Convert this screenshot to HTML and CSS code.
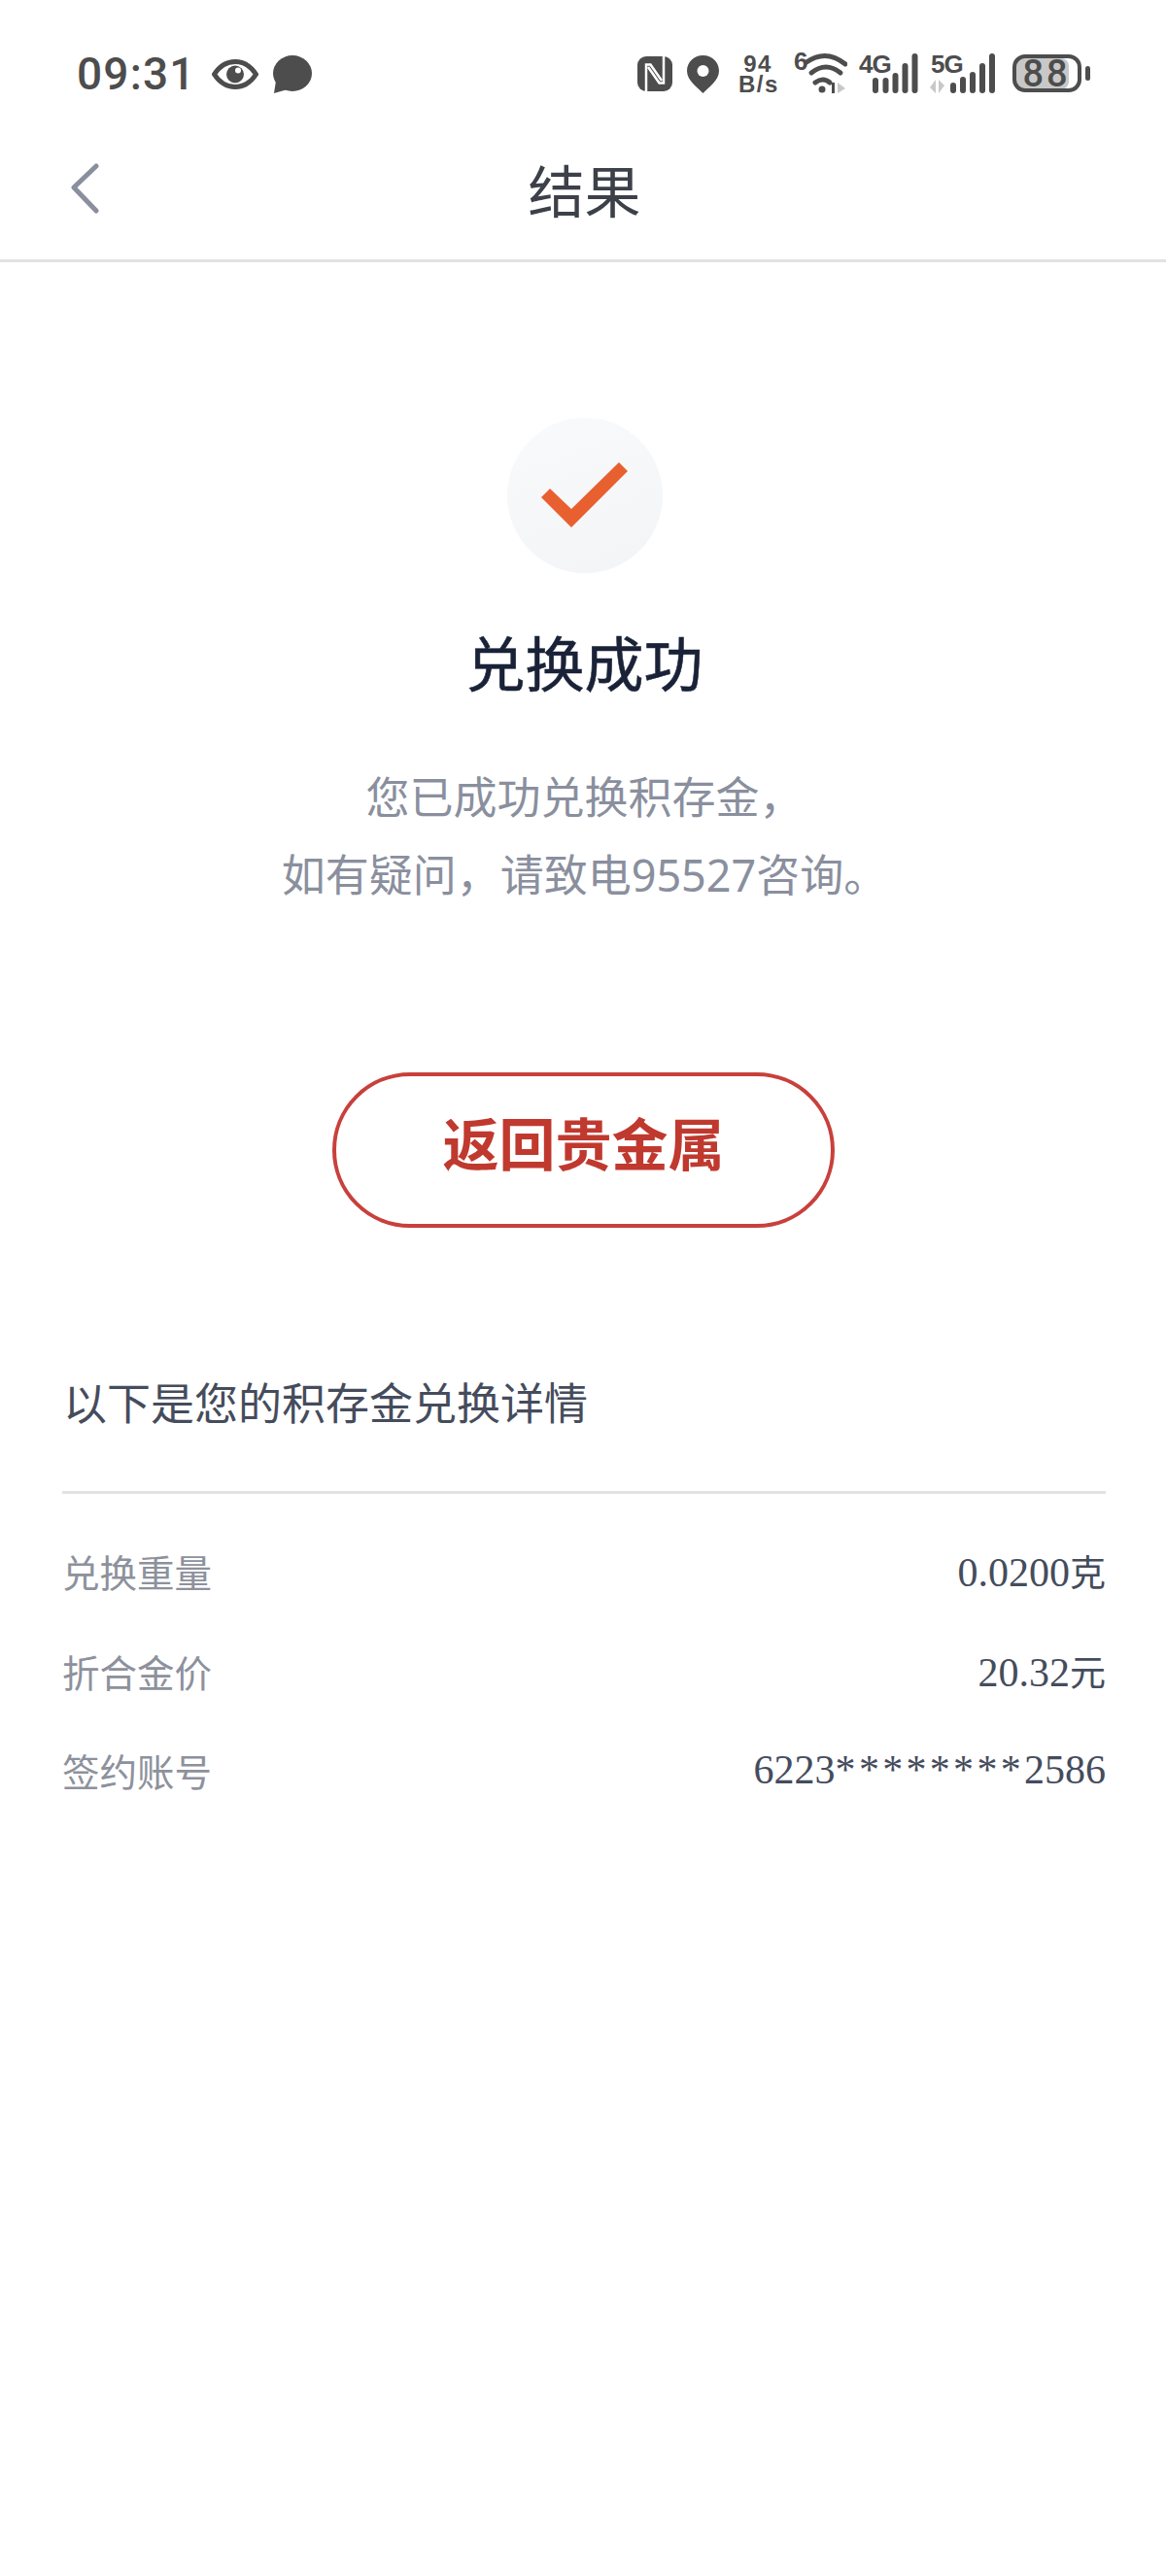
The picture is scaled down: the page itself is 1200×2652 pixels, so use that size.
FILE: index.html
```html
<!DOCTYPE html>
<html lang="zh">
  <head>
    <meta charset="utf-8" />
    <title>结果</title>
    <link rel="stylesheet" href="styles.css">
  </head>
  <body>
    <div class="status-bar">
      <div class="status-left">
        <span class="clock">09:31</span>
        <svg class="icon-eye" width="48" height="31" viewBox="0 0 48 31">
          <path d="M2.5 15.5C8 7 15 2.5 24 2.5S40 7 45.5 15.5C40 24 33 28.5 24 28.5S8 24 2.5 15.5Z" fill="none" stroke="#4d4d4d" stroke-width="5"/>
          <circle cx="24" cy="15.5" r="9" fill="#4d4d4d"/>
          <circle cx="27" cy="11.5" r="3" fill="#fff"/>
        </svg>
        <svg class="icon-chat" width="41" height="39" viewBox="0 0 41 39">
          <ellipse cx="21" cy="18.5" rx="20" ry="18.5" fill="#4d4d4d"/>
          <path d="M4 26L2 39L16 35Z" fill="#4d4d4d"/>
        </svg>
      </div>
      <div class="status-right">
        <svg class="icon-nfc" width="36" height="36" viewBox="0 0 36 36">
          <rect width="36" height="36" rx="9" fill="#4d4d4d"/>
          <path d="M9 36V8.5H13.5L25 25" fill="none" stroke="#fff" stroke-width="2.5"/>
          <path d="M27 0V27.5H22.5L11 11" fill="none" stroke="#fff" stroke-width="2.5"/>
        </svg>
        <svg class="icon-pin" width="33" height="39" viewBox="0 0 33 39">
          <path d="M16.5 0C26 0 33 7 33 16C33 26 22 33 16.5 39C11 33 0 26 0 16C0 7 7 0 16.5 0Z" fill="#4d4d4d"/>
          <circle cx="16.5" cy="16" r="6" fill="#fff"/>
        </svg>
        <div class="net-speed">94<br>B/s</div>
        <svg class="icon-wifi" width="55" height="54" viewBox="0 -6 55 54">
          <text class="sb-small" x="0" y="17">6</text>
          <path d="M13 9Q33 -5 53 11" fill="none" stroke="#4d4d4d" stroke-width="5" stroke-linecap="round"/>
          <path d="M18 20Q33 8 48 20" fill="none" stroke="#4d4d4d" stroke-width="5" stroke-linecap="round"/>
          <path d="M22 30Q30 24 37 30" fill="none" stroke="#4d4d4d" stroke-width="5" stroke-linecap="round"/>
          <circle cx="29" cy="37" r="3.5" fill="#4d4d4d"/>
          <rect x="39" y="30" width="3" height="11" fill="#4d4d4d"/>
          <path d="M45 30L53 36L45 41Z" fill="#c8c8c8"/>
        </svg>
        <svg class="icon-signal" width="61" height="54" viewBox="0 -6 61 54">
          <text class="sb-small" x="0" y="20">4G</text>
          <rect x="14" y="25" width="6" height="16" rx="3" fill="#4d4d4d"/>
          <rect x="24.5" y="25" width="6" height="16" rx="3" fill="#4d4d4d"/>
          <rect x="34.5" y="20" width="6" height="21" rx="3" fill="#4d4d4d"/>
          <rect x="44.5" y="10" width="6" height="31" rx="3" fill="#4d4d4d"/>
          <rect x="54.5" y="0" width="6" height="41" rx="3" fill="#4d4d4d"/>
        </svg>
        <svg class="icon-signal" width="68" height="54" viewBox="0 -6 68 54">
          <text class="sb-small" x="1" y="20">5G</text>
          <path d="M6 27V41L0 35Z M9 41V27L15 33Z" fill="#c8c8c8"/>
          <rect x="21" y="30" width="6" height="11" rx="3" fill="#4d4d4d"/>
          <rect x="31" y="24" width="6" height="17" rx="3" fill="#4d4d4d"/>
          <rect x="41" y="19" width="6" height="22" rx="3" fill="#4d4d4d"/>
          <rect x="51" y="10" width="6" height="31" rx="3" fill="#4d4d4d"/>
          <rect x="61" y="0" width="6" height="41" rx="3" fill="#4d4d4d"/>
        </svg>
        <svg class="icon-battery" width="80" height="50" viewBox="0 -5 80 50">
          <rect x="4" y="4" width="54" height="32" rx="8" fill="#c8c8c8"/>
          <rect x="2" y="2" width="67" height="35" rx="11" fill="none" stroke="#4d4d4d" stroke-width="4"/>
          <rect x="75" y="12" width="5" height="15" rx="2.5" fill="#4d4d4d"/>
          <text class="sb-batt" x="35" y="33" text-anchor="middle">88</text>
        </svg>
      </div>
    </div>

    <div class="nav-bar">
      <svg class="back-btn" width="32" height="54" viewBox="0 0 32 54">
        <path d="M27 5L4 27L27 51" fill="none" stroke="#8a8f9e" stroke-width="5" stroke-linecap="round" stroke-linejoin="round"/>
      </svg>
      <h1 class="nav-title">结果</h1>
    </div>

    <div class="result">
      <div class="check-circle">
        <svg width="90" height="68" viewBox="0 0 90 68">
          <path d="M0 36L9 27L31 48L80 0L89 9L31 67Z" fill="#e8602f"/>
        </svg>
      </div>
      <h2 class="result-title">兑换成功</h2>
      <p class="result-text">您已成功兑换积存金，<br>如有疑问，请致电95527咨询。</p>
      <button class="back-metal" type="button">返回贵金属</button>
    </div>

    <div class="detail">
      <div class="detail-head">以下是您的积存金兑换详情</div>
      <div class="detail-row">
        <span class="detail-label">兑换重量</span>
        <span class="detail-value">0.0200<span class="unit">克</span></span>
      </div>
      <div class="detail-row">
        <span class="detail-label">折合金价</span>
        <span class="detail-value">20.32<span class="unit">元</span></span>
      </div>
      <div class="detail-row">
        <span class="detail-label">签约账号</span>
        <span class="detail-value">6223<span class="mask">********</span>2586</span>
      </div>
    </div>
  </body>
</html>
```

FILE: styles.css
```css
/* result page */
body {
  font-family: "Noto Sans", "Noto Sans CJK SC", sans-serif;
  background-color: #fff;
  margin: 0;
  padding: 0;
}
h1, h2, p {
  margin: 0;
  font-weight: normal;
}

/* status bar */
.status-bar {
  display: flex;
  justify-content: space-between;
  align-items: center;
  height: 80px;
  padding: 36px 78px 0 79px;
}
.status-left, .status-right {
  display: flex;
  align-items: center;
}
.clock {
  font-family: Roboto, sans-serif;
  font-size: 46px;
  font-weight: 500;
  color: #4d4d4d;
  letter-spacing: 1.2px;
}
.icon-eye {
  margin-left: 16px;
}
.icon-chat {
  margin-left: 14px;
}
.icon-pin {
  margin-left: 15px;
}
.net-speed {
  width: 40px;
  margin-left: 20px;
  font-family: "Liberation Sans", sans-serif;
  font-size: 24px;
  font-weight: bold;
  line-height: 21px;
  letter-spacing: 1.5px;
  text-align: center;
  color: #4d4d4d;
}
.icon-wifi {
  margin-left: 17px;
}
.icon-signal {
  margin-left: 12px;
}
.icon-battery {
  margin-left: 17px;
}
.sb-small {
  font-family: "Liberation Sans", sans-serif;
  font-size: 26px;
  font-weight: bold;
  letter-spacing: -1px;
  fill: #4d4d4d;
}
.sb-batt {
  font-family: Roboto, sans-serif;
  font-size: 38px;
  font-weight: 500;
  letter-spacing: 3px;
  fill: #4d4d4d;
}

/* nav */
.nav-bar {
  position: relative;
  display: flex;
  justify-content: center;
  align-items: center;
  height: 146px;
  padding: 5px 0 0 3px;
  border-bottom: 3px solid #e2e2e2;
}
.back-btn {
  position: absolute;
  left: 72px;
  top: 50px;
}
.nav-title {
  font-size: 58px;
  color: #3c4048;
}

/* result block */
.result {
  display: flex;
  flex-direction: column;
  align-items: center;
  padding-top: 160px;
}
.check-circle {
  display: flex;
  justify-content: center;
  align-items: center;
  width: 160px;
  height: 160px;
  margin-left: 3px;
  border-radius: 50%;
  background: linear-gradient(160deg, #f9fafb, #f3f4f6);
}
.result-title {
  margin: 51px 0 0 3px;
  font-size: 61px;
  line-height: 86px;
  color: #1a2238;
  -webkit-text-stroke: 0.6px #1a2238;
}
.result-text {
  margin: 54px 0 0 3px;
  font-size: 45px;
  line-height: 80px;
  text-align: center;
  color: #8a8f9e;
}
.back-metal {
  width: 517px;
  height: 160px;
  margin: 163px 0 0 1px;
  padding: 0 0 18px;
  border: 4px solid #c8403c;
  border-radius: 80px;
  background-color: #fff;
  font-family: inherit;
  font-size: 58px;
  font-weight: bold;
  color: #c0392f;
}

/* detail list */
.detail {
  margin: 152px 62px 0 64px;
}
.detail-head {
  padding: 0 0 57px 1px;
  border-bottom: 3px solid #e2e2e2;
  font-family: "Liberation Serif", "Noto Sans CJK SC", serif;
  font-size: 45px;
  line-height: 62px;
  color: #454c5c;
}
.detail-row {
  display: flex;
  justify-content: space-between;
  align-items: center;
  height: 102.5px;
  font-family: "Liberation Serif", "Noto Sans CJK SC", serif;
}
.detail-head + .detail-row {
  margin-top: 28px;
}
.detail-label {
  font-size: 38.5px;
  color: #8d919c;
}
.detail-value {
  font-size: 42px;
  color: #454c5c;
}
.unit {
  font-size: 37px;
}
.mask {
  letter-spacing: 3.3px;
}
```
